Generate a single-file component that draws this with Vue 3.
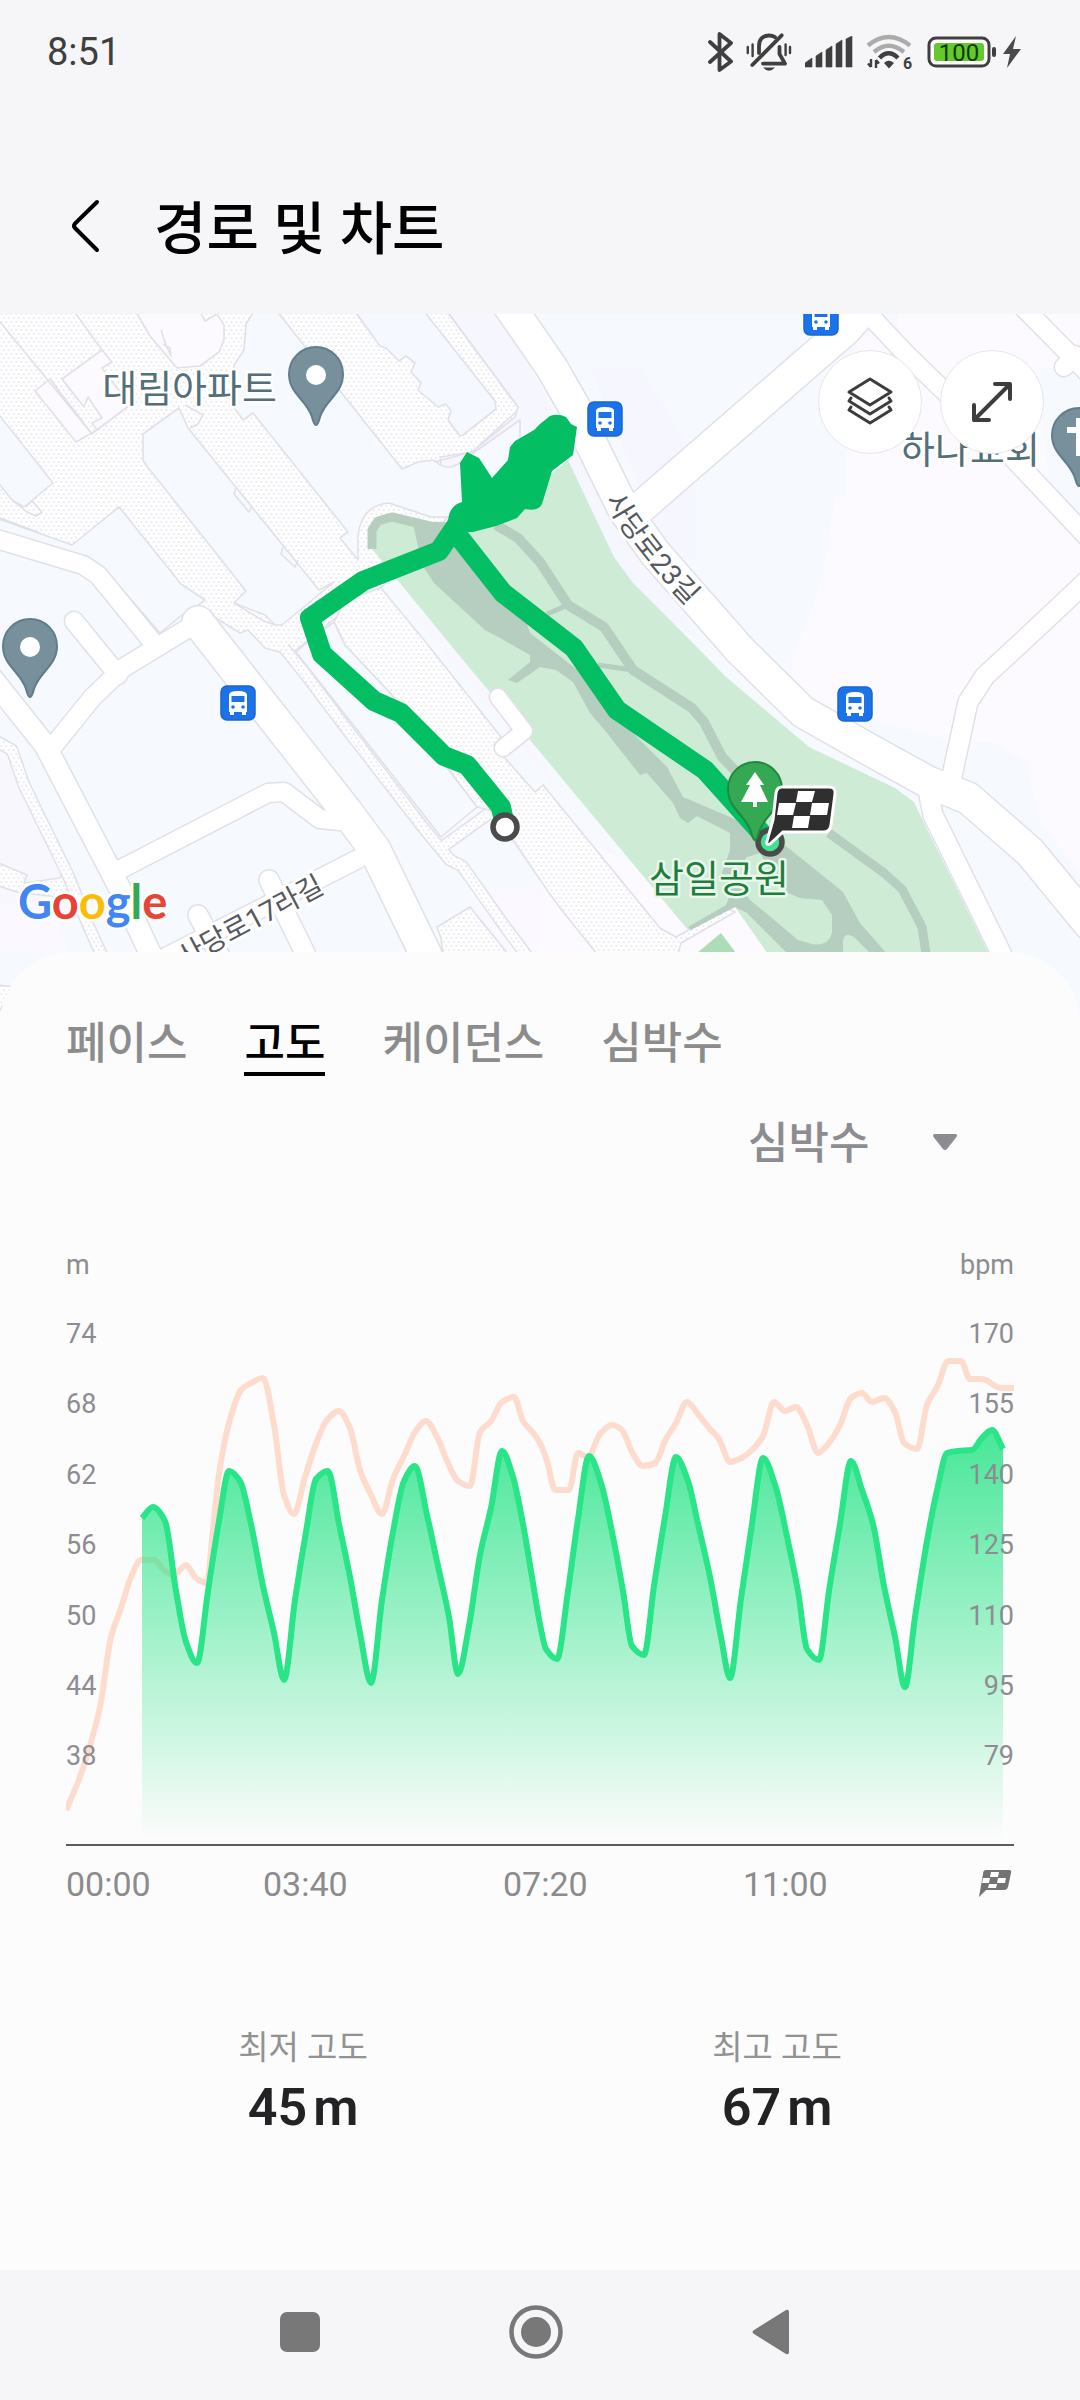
<template>
    <div class="page">
        <header>
            <div class="status-bar">
                <time>8:51</time>
                <div class="status-icons">
                    <svg class="bluetooth" width="25" height="40" viewBox="0 0 25 40">
                        <path d="M2 10 L23 29.500 L11.500 38 V2 L23 11 L2 30" fill="none" stroke="#3f3f3f" stroke-width="3.8" stroke-linecap="round" stroke-linejoin="round" />
                    </svg>
                    <svg class="muted" width="46" height="40" viewBox="0 0 46 40">
                        <g fill="none" stroke="#3f3f3f" stroke-width="3.8" stroke-linecap="round" stroke-linejoin="round">
                            <path d="M13 21 V14 C13 7 17 3.500 23 3.500 C25.500 3.500 27.500 4.200 29 5.200" />
                            <path d="M33.500 15 V22 L39 31.600 H17" />
                            <path d="M35.700 3.300 L6.300 33" />
                            <path d="M1.800 15 V21 M6.600 12.500 V24 M39.600 12.500 V23 M44 15 V21" stroke-width="2.4" />
                        </g>
                        <path d="M17 35.500 H29 Q23 42 17 35.500 Z" fill="#3f3f3f" />
                    </svg>
                    <svg class="signal" width="48" height="32" viewBox="0 0 48 32" fill="#3f3f3f">
                        <path d="M0 31 V27 L7 22 V31 Z M11 31 V20 L17 16 V31 Z M21 31 V14 L27 10 V31 Z M31 31 V8 L37 4 V31 Z M41 31 V3 L47 0 V31 Z" stroke="#3f3f3f" stroke-width="0.6" stroke-linejoin="round" />
                    </svg>
                    <svg class="wifi" width="48" height="44" viewBox="0 -4 48 44">
                        <g fill="none" stroke-width="4.4">
                            <path d="M2 11.500 Q22.500 -5.500 44 11.500" stroke="#ababab" />
                            <path d="M8 18 Q22.500 5.500 38 18" stroke="#ababab" />
                            <path d="M13.500 24 Q22.500 14.500 32 24" stroke="#3f3f3f" />
                        </g>
                        <path d="M18 29 Q22.500 24.500 28 29 L23 34.500 Z" fill="#3f3f3f" />
                        <path d="M5 25 V33 M2 29.500 L5 33 M10 34 V26 M13 29.500 L10 26" fill="none" stroke="#3f3f3f" stroke-width="2.4" />
                        <text x="37" y="35" class="wifi-gen">6</text>
                    </svg>
                    <svg class="battery" width="70" height="32" viewBox="0 0 70 32">
                        <rect x="2" y="2" width="60" height="28" rx="7" fill="#fff" stroke="#3f3f3f" stroke-width="3" />
                        <rect x="7" y="7" width="50" height="18" rx="3" fill="#64c92b" />
                        <rect x="65" y="11" width="4" height="10" rx="2" fill="#3f3f3f" />
                        <text x="32" y="24.500" text-anchor="middle" class="battery-level">100</text>
                    </svg>
                    <svg class="bolt" width="18" height="32" viewBox="0 0 18 32">
                        <path d="M13 0 L0 18 H7 L4 32 L18 13 H10 Z" fill="#4a4a4a" />
                    </svg>
                </div>
            </div>
            <div class="title-bar">
                <button class="back" aria-label="뒤로">
                    <svg width="30" height="54" viewBox="0 0 30 54">
                        <path d="M27 3 L5 24.500 Q3 27 5 29 L27 51" fill="none" stroke="#000" stroke-width="4" stroke-linecap="round" />
                    </svg>
                </button>
                <h1>경로 및 차트</h1>
            </div>
        </header>

        <section class="map">
            <svg viewBox="0 314 1080 710" preserveAspectRatio="xMidYMid slice">
                <defs>
                    <pattern id="dots" width="5" height="8" patternUnits="userSpaceOnUse">
                        <rect width="5" height="8" fill="#fefefe" />
                        <circle cx="1.300" cy="2" r="1" fill="#e8e8f1" />
                        <circle cx="3.800" cy="6" r="1" fill="#e8e8f1" />
                    </pattern>
                    <path id="road23" d="M605 500 Q630 548 694 613" />
                    <path id="pin" d="M0 51 C-2 51 -2.500 48 -4 43 C-9 26 -27 20 -27 0 A27 27 0 0 1 27 0 C27 20 9 26 4 43 C2.500 48 2 51 0 51 Z" />
                    <g id="bus">
                        <rect x="-17" y="-17" width="34" height="34" rx="6" fill="#1a73e8" stroke="#1b66cf" stroke-width="1.500" />
                        <path d="M-9 9 V-8 Q-9 -12 0 -12 Q9 -12 9 -8 V9 H8 V12 H4 V9 H-4 V12 H-8 V9 Z" fill="#fff" />
                        <rect x="-6.500" y="-7" width="13" height="6" fill="#1a73e8" />
                        <circle cx="-5" cy="4" r="1.800" fill="#1a73e8" />
                        <circle cx="5" cy="4" r="1.800" fill="#1a73e8" />
                    </g>
                </defs>

                <!-- ground -->
                <rect y="314" width="1080" height="710" fill="#f6faff" />
                <path d="M898 314 H1080 V870 L1056 843 L1038 817 L1027 763 L995 742 H960 L792 700 V656 L803 634 L814 603 L824 570 L835 497 H846 V440 H857 V335 H898 Z" fill="#fdfaff" />
                <path d="M1039 368 H1080 V530 L1048 480 Z" fill="#f6faff" />
                <path d="M440 314 H500 L575 450 L700 640 L620 590 L440 520 Z M590 368 H642 L654 390 L684 440 L696 480 V560 H670 Z" fill="#f6f6fe" />
                <path d="M0 740 L20 770 L70 870 L40 910 H0 Z M400 600 L460 640 L560 790 L690 935 L640 890 Z" fill="#f8f7fe" />
                <path d="M0 905 H50 L70 952 H0 Z" fill="#fbf9ff" />
                <path d="M560 835 L640 865 L690 932 L735 907 L766 952 H540 V878 Z" fill="#fdfaff" />
                <path d="M470 890 H540 V952 H505 Z" fill="#fbf9ff" />

                <!-- apartment blocks -->
                <g stroke="#e1e0e9" stroke-width="1.600" stroke-linejoin="round">
                    <path fill="url(#dots)" d="M-4 310 H446 L518 407 L515 417 L472 452 L440 457 L448 517 L381 588 L345 610 L290 655 L265 648 L248 630 L240 633 L198 607 L150 580 L72 545 L-4 523 Z" />
                    <path fill="url(#dots)" d="M381 588 L424 640 L501 737 L494 745 L504 757 L535 792 L543 785 L660 928 L676 937 L728 908 L735 912 L681 943 L678 954 H597 L564 913 L549 893 L515 843 L490 810 L477 807 L390 693 L345 645 L334 622 L345 600 Z" />
                    <path fill="#f6faff" d="M255 310 H276 L402 469 L418 462 L434 460 Q446 472 458 464 L520 420 V510 L448 517 L431 517 L389 503 Q362 505 358 535 L358 560 L340 538 L348 532 L253 413 L243 420 L230 402 L234 365 L244 350 L246 324 Z" />
                    <path fill="#f6faff" d="M143 434 L179 408 L188 428 L319 590 L334 582 L282 625 H275 L265 615 L234 603 L246 591 L146 465 L143 460 Z" />
                    <path fill="#f6faff" d="M119 507 L181 584 L205 600 L196 607 L182 615 L160 633 L103 567 L88 557 L-4 530 V518 L72 545 Z" />
                    <path fill="#f6faff" d="M-4 411 L53 483 L24 507 L12 500 L-4 480 Z" />
                    <path fill="#f6f8ff" d="M354 310 L380 346 L386 348 L399 361 L406 356 L415 363 L411 372 L421 383 L418 390 L438 407 L446 404 L451 411 L448 420 L460 436 L463 435 L496 409 L495 401 L423 310 Z" />
                    <path fill="#fdfaff" d="M135 310 H199 L205 321 L217 314 L224 325 V340 L219 352 L200 366 L177 368 L150 336 Z" />
                    <path fill="#fdfaff" d="M62 379 L102 350 L112 362 L102 368 L130 405 L97 430 L76 442 L35 391 L50 379 L92 434 L97 430 L92 423 L102 418 L88 397 L84 407 Z" />
                    <path fill="#f6faff" d="M334 622 L345 645 L390 693 L477 807 L441 837 L296 652 L310 640 Z" />
                    <path fill="none" d="M0 322 L92 434 M76 314 L102 350 M446 310 L518 407 M434 462 L472 452 L516 412 M185 405 L203 415 L198 424 L190 428 M236 488 L234 494 L249 512 L252 506 M283 547 L281 554 L295 567 L298 560 M0 518 L40 533 M12 500 L27 512 L36 516 L42 512 L32 501 L26 507 M234 603 L262 620 L275 625 M161 330 L166 345 L171 356 L170 348 L163 344" />
                    <path fill="url(#dots)" d="M437 927 L470 907 L508 954 H443 L441 938 Z" />
                    <path fill="url(#dots)" d="M-4 862 L27 875 L24 883 L60 878 L66 868 L78 890 L60 897 L20 893 L-4 885 Z M-4 985 L15 987 L-4 1016 Z" />
                </g>

                <!-- narrow footpaths -->
                <g fill="none" stroke-linejoin="round">
                    <path v-for="d in footpaths" :key="d" :d="d" stroke="#e1e0e9" stroke-width="13" />
                    <path v-for="d in footpaths" :key="d" :d="d" stroke="url(#dots)" stroke-width="10" />
                </g>

                <!-- park -->
                <path fill="#ceebd6" d="M377 555 L463 660 L540 752 L688 930 L735 907 L768 954 H989 L924 823 L914 802 L895 788 L809 747 L725 676 L690 640 L633 583 L614 557 L593 513 L568 460 L520 500 L448 522 L427 522 L389 513 L375 518 L368 530 V545 Z" />
                <g fill="none" stroke="#b5cebf" stroke-linejoin="round">
                    <path d="M372 549 V530 L378 521 L392 517 L430 526 L448 527" stroke-width="9" />
                    <path d="M496 525 L518 538 L540 562 L568 605 L604 627 L633 670 L692 708 L704 722 L722 757 L747 783" stroke-width="10" />
                    <path d="M829 833 L884 873 L902 889 L922 927 L926 954" stroke-width="9" />
                    <path d="M547 614 L568 605 M598 665 L633 670" stroke-width="5" />
                </g>
                <path fill="#b5cebf" d="M413 523 H448 L454 547 L503 593 L524 615 L530 633 L580 672 L600 700 L620 720 L643 743 L667 767 L683 797 L730 817 L760 830 L787 847 L822 875 L843 892 L860 923 L887 954 H788 L747 913 L735 907 L691 930 L688 927 L726 905 L731 893 L722 873 L730 850 V833 L697 816 L688 823 L680 818 L673 803 L647 773 L640 775 L607 733 L590 713 L573 682 L556 670 L540 667 L517 683 L508 680 L530 662 V655 L500 638 L485 630 L434 583 L422 565 Z" />
                <path fill="#ceebd6" d="M747 857 L760 853 L781 890 L800 898 L822 900 L832 915 V933 Q828 947 812 944 L798 940 L778 923 L750 900 L733 875 Z M843 954 V940 Q845 932 854 937 L871 954 Z" />
                <path fill="#aedcb8" d="M697 953 L721 933 L736 953 Z" />

                <!-- streets -->
                <g fill="none" stroke-linejoin="round" stroke-linecap="round">
                    <path v-for="road in roads" :key="road.d" :d="road.d" stroke="#e1e0e9" :stroke-width="road.width + 3" />
                    <path v-for="road in roads" :key="road.d" :d="road.d" stroke="#fff" :stroke-width="road.width" />
                </g>

                <!-- transit stops and places -->
                <use v-for="stop in busStops" :key="stop.x" href="#bus" :x="stop.x" :y="stop.y" />
                <g class="place">
                    <text x="277" y="402" text-anchor="end">대림아파트</text>
                    <text x="900" y="463">하나교회</text>
                    <text class="park-name" x="649" y="892">삼일공원</text>
                </g>
                <g class="street">
                    <text><textPath href="#road23">사당로23길</textPath></text>
                    <text transform="translate(184 967) rotate(-28)">사당로17라길</text>
                </g>
                <g fill="#78909c" stroke="#607d8b" stroke-width="2">
                    <use href="#pin" x="316" y="374" />
                    <use href="#pin" x="30" y="646" />
                    <use href="#pin" x="1079" y="435" />
                </g>
                <circle cx="316" cy="375" r="10" fill="#fff" />
                <circle cx="30" cy="647" r="10" fill="#fff" />
                <path d="M1076 418 H1081 V456 H1076 V433 H1067 V427 H1076 Z" fill="#fff" />

                <!-- walked route -->
                <g fill="none" stroke="#03be62" stroke-width="20" stroke-linejoin="round">
                    <path d="M505 826 L501 807 L467 765 L444 756 L401 713 L374 701 L322 654 L310 618 L363 581 L439 551 L460 520" />
                    <path d="M452 528 L503 593 L574 648 L617 710 L705 770 L766 838" />
                </g>
                <path fill="#03be62" d="M462 502 L460 463 L467 452 L479 458 L492 478 L508 460 L510 447 L515 441 L534 430 L540 424 L550 416 Q558 413 566 417 L571 424 L577 427 L573 455 L552 471 L542 504 Q538 512 525 509 L517 518 L496 526 L473 532 L448 532 L448 523 Q448 506 462 502 Z" />
                <circle cx="505" cy="827" r="12" fill="#fff" stroke="#4b4b4b" stroke-width="5.500" />
                <circle cx="770" cy="842" r="12" fill="#3fe38f" stroke="#4b4b4b" stroke-width="5.500" />
                <use href="#pin" x="755" y="789" fill="#34a853" stroke="#23883f" stroke-width="2" />
                <path d="M755 772 L764 785 H760 L768 802 H757 V807 H753 V802 H741 L750 785 H746 Z" fill="#fff" />
                <path d="M782 787 H829 Q836 787 835 794 L831 825 Q830 832 824 832 H783 L770 844 Q766 846 767 841 L773 820 L776 793 Q777 787 782 787 Z" fill="#2f2f2f" stroke="#fff" stroke-width="3" />
                <path d="M798 791 H815 L812 802 H796 Z M779 803 H796 L793 815 H777 Z M812 803 H829 L827 815 H810 Z M794 816 H810 L808 828 H792 Z" fill="#fff" />

                <text class="google" x="18" y="919"><tspan fill="#4285f4">G</tspan><tspan fill="#ea4335">o</tspan><tspan fill="#fbbc05">o</tspan><tspan fill="#4285f4">g</tspan><tspan fill="#34a853">l</tspan><tspan fill="#ea4335">e</tspan></text>
            </svg>
            <div class="map-buttons">
                <button aria-label="지도 레이어">
                    <svg width="48" height="52" viewBox="0 0 48 52" fill="none" stroke="#3d3d3d" stroke-width="3" stroke-linejoin="round" stroke-linecap="round">
                        <path d="M24 3 L45 16 L24 29 L3 16 Z" />
                        <path d="M5 22 L3 25 L24 38 L45 25 L43 22" />
                        <path d="M5 31 L3 34 L24 47 L45 34 L43 31" />
                    </svg>
                </button>
                <button aria-label="전체 화면">
                    <svg width="44" height="44" viewBox="0 0 44 44" fill="none" stroke="#3d3d3d" stroke-width="4" stroke-linejoin="round" stroke-linecap="round">
                        <path d="M4 40 L40 4 M25 4 H40 V19 M4 25 V40 H19" />
                    </svg>
                </button>
            </div>
        </section>

        <main class="sheet">
            <nav class="tabs">
                <button v-for="tab in tabs" :key="tab" :class="{ active: tab === activeTab }" @click="activeTab = tab">
                    {{ tab }}
                </button>
            </nav>
            <label class="compare">
                <select v-model="compare" aria-label="비교 항목">
                    <option>심박수</option>
                </select>
                <svg width="26" height="18" viewBox="0 0 26 18">
                    <path d="M3 1 H23 Q26 1 24.500 4 L15 16 Q13 18 11 16 L1.500 4 Q0 1 3 1 Z" fill="#8d8c91" />
                </svg>
            </label>

            <svg class="chart" viewBox="0 0 948 670">
                <defs>
                    <linearGradient id="fade" gradientUnits="userSpaceOnUse" x1="0" y1="185" x2="0" y2="600">
                        <stop offset="0" stop-color="#2ae488" stop-opacity="0.87" />
                        <stop offset="1" stop-color="#2ae488" stop-opacity="0" />
                    </linearGradient>
                </defs>
                <path :d="heartLine" fill="none" stroke="#fddccd" stroke-width="6" stroke-linejoin="round" />
                <path :d="`${altitudeLine} L937 602 L76 602 Z`" fill="url(#fade)" />
                <path :d="altitudeLine" fill="none" stroke="#2ae488" stroke-width="6" stroke-linejoin="round" />
                <g class="scale">
                    <text x="0" y="34">m</text>
                    <text x="948" y="34" text-anchor="end">bpm</text>
                    <template v-for="(row, i) in scale" :key="row.m">
                        <text x="0" :y="103 + i * 70.4">{{ row.m }}</text>
                        <text x="948" :y="103 + i * 70.4" text-anchor="end">{{ row.bpm }}</text>
                    </template>
                </g>
                <rect y="604" width="948" height="2" fill="#5c5c60" />
                <g class="times">
                    <text v-for="t in times" :key="t.label" :x="t.x" y="656">{{ t.label }}</text>
                </g>
                <path d="M920 630 H943 Q946 630 945 633 L942 647 Q941 650 938 650 H920 L913 657 L917 634 Q917 630 920 630 Z" fill="#737373" />
                <path d="M925 632 H933 L932 637 H924 Z M917 638 H924 L923 643 H916 Z M932 638 H940 L939 643 H931 Z M923 644 H931 L930 648 H922 Z" fill="#fff" />
            </svg>

            <dl class="stats">
                <div v-for="stat in stats" :key="stat.label">
                    <dt>{{ stat.label }}</dt>
                    <dd>{{ stat.value }}<span>m</span></dd>
                </div>
            </dl>
        </main>

        <footer>
            <button aria-label="최근 앱">
                <svg width="56" height="56" viewBox="0 0 56 56">
                    <rect x="8" y="8" width="40" height="40" rx="7" fill="#787878" />
                </svg>
            </button>
            <button aria-label="홈">
                <svg width="56" height="56" viewBox="0 0 56 56">
                    <circle cx="28" cy="28" r="24.500" fill="none" stroke="#787878" stroke-width="4.500" />
                    <circle cx="28" cy="28" r="15" fill="#787878" />
                </svg>
            </button>
            <button aria-label="이전">
                <svg width="56" height="56" viewBox="0 0 56 56">
                    <path d="M10 26 L42 6 Q45 5 45 8 V48 Q45 51 42 50 L10 30 Q7 28 10 26 Z" fill="#787878" />
                </svg>
            </button>
        </footer>
    </div>
</template>

<script setup>
import { ref } from 'vue';

const tabs = ['페이스', '고도', '케이던스', '심박수'];
const activeTab = ref('고도');
const compare = ref('심박수');

const stats = [
    { label: '최저 고도', value: 45 },
    { label: '최고 고도', value: 67 },
];

const scale = [
    { m: 74, bpm: 170 },
    { m: 68, bpm: 155 },
    { m: 62, bpm: 140 },
    { m: 56, bpm: 125 },
    { m: 50, bpm: 110 },
    { m: 44, bpm: 95 },
    { m: 38, bpm: 79 },
];

const times = [
    { label: '00:00', x: 0 },
    { label: '03:40', x: 197 },
    { label: '07:20', x: 437 },
    { label: '11:00', x: 677 },
];

const busStops = [
    { x: 605, y: 419 },
    { x: 821, y: 318 },
    { x: 238, y: 703 },
    { x: 855, y: 704 },
];

const roads = [
    { width: 31, d: 'M505 300 L552 368 L576 410 L592 445 L624 510 L655 553 L740 650 L803 712 L870 750 L928 782 L968 798 L1030 852 L1090 925' },
    { width: 31, d: 'M640 508 L845 330 L872 300' },
    { width: 18, d: 'M860 305 L905 353 L1010 455 L1090 540' },
    { width: 18, d: 'M1020 304 L1090 375 M1075 355 L1064 367' },
    { width: 19, d: 'M950 785 L968 702 L985 676 L1024 640 L1090 578' },
    { width: 19, d: 'M928 790 L933 815 L1002 955' },
    { width: 18, d: 'M-10 537 L83 565 L98 575 L151 640' },
    { width: 18, d: 'M195 624 L123 668 L92 698 L50 750' },
    { width: 18, d: 'M74 621 L118 675' },
    { width: 21, d: 'M-10 676 L45 745 L118 885 L151 955' },
    { width: 18, d: 'M119 870 L268 793 L284 792 L320 819 L350 822' },
    { width: 31, d: 'M198 622 L212 640 L347 812 L375 850 L426 955' },
    { width: 18, d: 'M358 859 L160 960' },
    { width: 19, d: 'M269 880 L306 955' },
    { width: 19, d: 'M198 915 L222 960' },
    { width: 16, d: 'M498 697 L524 731 L503 748' },
];

const footpaths = [
    'M284 648 L306 675 L346 728 L425 830 L450 860 L462 866 L506 928 L530 960',
    'M441 848 L488 814',
    'M-4 741 L12 750 L24 785 L68 875 L88 925 L104 960',
];

const altitude = [
    [76, 278], [87, 267], [99, 281], [110, 351], [120, 402], [131, 423], [142, 351], [153, 281],
    [163, 231], [174, 241], [185, 284], [197, 346], [208, 393], [218, 440], [229, 360], [240, 292],
    [250, 239], [262, 231], [273, 284], [284, 337], [294, 393], [305, 443], [316, 360], [327, 292],
    [338, 241], [349, 226], [361, 275], [372, 326], [383, 377], [392, 434], [403, 386], [414, 315],
    [425, 268], [436, 211], [447, 237], [457, 284], [466, 337], [474, 384], [480, 409], [491, 419],
    [502, 351], [512, 279], [523, 216], [535, 243], [546, 292], [557, 351], [566, 406], [578, 415],
    [588, 346], [599, 277], [610, 217], [622, 241], [632, 284], [644, 337], [655, 397], [664, 438],
    [675, 359], [686, 284], [697, 218], [710, 248], [720, 292], [732, 351], [741, 409], [753, 420],
    [763, 351], [774, 284], [785, 221], [796, 250], [807, 284], [818, 346], [829, 397], [839, 447],
    [849, 377], [861, 301], [872, 246], [881, 213], [892, 211], [906, 210], [916, 198], [926, 190],
    [937, 209],
];

const heartRate = [
    [0, 570], [12, 542], [23, 509], [34, 467], [45, 397], [55, 368], [65, 337], [75, 320],
    [88, 320], [98, 330], [108, 335], [120, 325], [130, 338], [141, 343], [146, 300], [153, 234],
    [163, 183], [175, 150], [185, 143], [197, 138], [208, 185], [218, 255], [228, 274], [239, 237],
    [251, 201], [261, 180], [273, 171], [284, 188], [294, 230], [305, 255], [316, 274], [327, 239],
    [339, 214], [349, 192], [360, 181], [371, 197], [382, 223], [392, 241], [404, 246], [414, 192],
    [425, 181], [436, 162], [448, 157], [457, 181], [468, 194], [474, 203], [481, 221], [489, 250],
    [503, 250], [512, 213], [522, 217], [534, 194], [546, 185], [556, 190], [566, 212], [577, 226],
    [589, 223], [600, 199], [610, 183], [621, 162], [632, 174], [643, 188], [653, 199], [664, 222],
    [677, 217], [688, 208], [697, 196], [708, 162], [719, 171], [730, 167], [741, 185], [752, 213],
    [763, 203], [774, 185], [785, 158], [796, 153], [806, 162], [818, 158], [829, 172], [838, 203],
    [851, 209], [861, 165], [872, 145], [882, 121], [895, 121], [904, 139], [916, 139], [935, 148],
    [948, 148],
];

// Smooth curve that keeps peaks and valleys on the data points
const smooth = (points) => {
    const slope = (i) => (points[i + 1][1] - points[i][1]) / (points[i + 1][0] - points[i][0]);
    const tangents = points.map((p, i) => {
        if (i === 0) return slope(0);
        if (i === points.length - 1) return slope(i - 1);
        const before = slope(i - 1);
        const after = slope(i);
        return before * after <= 0 ? 0 : (2 * before * after) / (before + after);
    });
    return points.reduce((d, [x, y], i) => {
        if (i === 0) return `M${x} ${y}`;
        const [px, py] = points[i - 1];
        const step = (x - px) / 3;
        return `${d} C${px + step} ${py + tangents[i - 1] * step} ${x - step} ${y - tangents[i] * step} ${x} ${y}`;
    }, '');
};

const altitudeLine = smooth(altitude);
const heartLine = smooth(heartRate);
</script>

<style>
body {
    margin: 0;
    background: #f6f6f8;
}
</style>

<style scoped>
.page {
    display: flex;
    flex-direction: column;
    min-height: 100vh;
    font-family: Roboto, "Noto Sans CJK KR", sans-serif;
    background: #f6f6f8;
}

button {
    padding: 0;
    border: none;
    background: none;
    font: inherit;
    color: inherit;
    cursor: pointer;
}

svg {
    display: block;
}

/* Status bar */
.status-bar {
    display: flex;
    align-items: center;
    justify-content: space-between;
    height: 104px;
    padding: 0 59px 0 47px;
    font-size: 38px;
    color: #3f3f3f;
}

.status-icons {
    display: flex;
    align-items: center;
    gap: 13px;
}

.bolt {
    margin-left: -7px;
}

.wifi-gen {
    font-size: 16px;
    font-weight: 700;
    fill: #3f3f3f;
}

.battery-level {
    font-size: 24px;
    fill: #123a00;
}

/* Title */
.title-bar {
    display: flex;
    align-items: center;
    gap: 54px;
    height: 176px;
    padding: 34px 70px 0;
}

h1 {
    margin: 0;
    padding-top: 8px;
    font-size: 57px;
    font-weight: 500;
    line-height: 64px;
    color: #000;
}

/* Map */
.map {
    position: relative;
}

.map > svg {
    width: 100%;
    height: 710px;
}

.place {
    font-size: 38px;
    fill: #546e7a;
    stroke: #fff;
    stroke-width: 5px;
    stroke-linejoin: round;
    paint-order: stroke;
}

.park-name {
    fill: #1e7e3c;
    stroke: #eaf7ed;
}

.street {
    font-size: 28px;
    fill: #55585d;
    stroke: #fff;
    stroke-width: 6px;
    stroke-linejoin: round;
    paint-order: stroke;
}

.google {
    font-family: Lato, sans-serif;
    font-size: 47px;
    font-weight: 700;
    stroke: #fff;
    stroke-width: 5px;
    stroke-linejoin: round;
    paint-order: stroke;
}

.map-buttons {
    position: absolute;
    top: 36px;
    right: 36px;
    display: flex;
    gap: 18px;
}

.map-buttons button {
    display: flex;
    align-items: center;
    justify-content: center;
    width: 104px;
    height: 104px;
    border: 1px solid #e6e6e8;
    border-radius: 50%;
    background: #fff;
}

/* Sheet over the lower edge of the map */
.sheet {
    position: relative;
    flex: 1;
    margin-top: -72px;
    padding: 60px 66px;
    border-radius: 72px 72px 0 0;
    background: #fcfcfc;
}

.tabs {
    display: flex;
    gap: 57px;
}

.tabs button {
    padding-top: 4px;
    border-bottom: 4px solid transparent;
    font-size: 44px;
    font-weight: 500;
    line-height: 56px;
    color: #8c8c8c;
}

.tabs .active {
    border-color: #000;
    color: #000;
}

.compare {
    display: flex;
    align-items: center;
    justify-content: flex-end;
    gap: 62px;
    margin-top: 36px;
    padding-right: 56px;
}

select {
    appearance: none;
    box-sizing: border-box;
    height: 60px;
    padding: 4px 0 0;
    border: none;
    background: none;
    font: inherit;
    font-size: 44px;
    font-weight: 500;
    color: #8d8c91;
}

.chart {
    width: 100%;
    margin-top: 68px;
}

.scale {
    font-size: 27px;
    fill: #8d8c91;
}

.times {
    font-size: 34px;
    fill: #8c8c8c;
}

/* Lowest and highest altitude */
.stats {
    display: flex;
    margin: 114px 0 0;
    text-align: center;
}

.stats div {
    flex: 1;
}

dt {
    font-size: 33px;
    line-height: 48px;
    color: #929292;
}

dd {
    margin: 6px 0 0;
    font-size: 52px;
    font-weight: 600;
    line-height: 60px;
    color: #232325;
}

dd span {
    margin-left: 6px;
}

/* System navigation */
footer {
    display: flex;
    align-items: center;
    justify-content: center;
    gap: 180px;
    height: 124px;
    padding: 0 8px 6px 0;
}
</style>
